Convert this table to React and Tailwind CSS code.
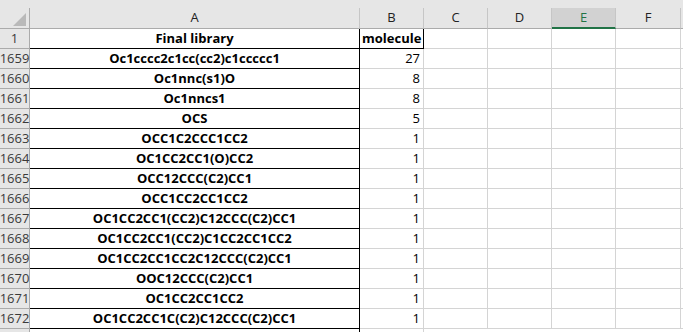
import React from "react";

// sheet rows: row number, SMILES string, molecule count
const rows = [
  [1659, "Oc1cccc2c1cc(cc2)c1ccccc1", 27],
  [1660, "Oc1nnc(s1)O", 8],
  [1661, "Oc1nncs1", 8],
  [1662, "OCS", 5],
  [1663, "OCC1C2CCC1CC2", 1],
  [1664, "OC1CC2CC1(O)CC2", 1],
  [1665, "OCC12CCC(C2)CC1", 1],
  [1666, "OCC1CC2CC1CC2", 1],
  [1667, "OC1CC2CC1(CC2)C12CCC(C2)CC1", 1],
  [1668, "OC1CC2CC1(CC2)C1CC2CC1CC2", 1],
  [1669, "OC1CC2CC1CC2C12CCC(C2)CC1", 1],
  [1670, "OOC12CCC(C2)CC1", 1],
  [1671, "OC1CC2CC1CC2", 1],
  [1672, "OC1CC2CC1C(C2)C12CCC(C2)CC1", 1],
];

const font = { fontFamily: "'Open Sans', Lato, sans-serif" };

const EmptyCells = () => (
  <>
    <div className="w-[64px] shrink-0 border-r border-b border-[#d4d4d4]" />
    <div className="w-[64px] shrink-0 border-r border-b border-[#d4d4d4]" />
    <div className="w-[64px] shrink-0 border-r border-b border-[#d4d4d4]" />
    <div className="w-[65px] shrink-0 border-r border-b border-[#d4d4d4]" />
    <div className="flex-1 border-b border-[#d4d4d4]" />
  </>
);

const RowHead = ({ n }) => (
  <div className="w-[30px] shrink-0 flex items-center justify-center bg-[#e6e6e6] border-r border-b border-[#ababab] text-[13px] text-[#3a3a3a]">
    <span className="whitespace-nowrap">{n}</span>
  </div>
);

export default function App() {
  return (
    <div className="w-[683px] h-[332px] overflow-hidden bg-white select-none" style={font}>
      <div className="h-[8px] bg-[#e6e6e6]" />

      {/* column header strip */}
      <div className="flex h-[21px] bg-[#e6e6e6] text-[13px] text-[#222]">
        <div className="w-[30px] shrink-0 relative border-r border-b border-[#ababab]">
          <svg className="absolute left-[13px] top-[5px]" width="13" height="13" viewBox="0 0 13 13">
            <polygon points="13,0 13,13 0,13" fill="#b9b9b9" />
          </svg>
        </div>
        <div className="w-[330px] shrink-0 flex items-center justify-center border-r border-b border-r-[#c6c6c6] border-b-[#ababab]">A</div>
        <div className="w-[64px] shrink-0 flex items-center justify-center border-r border-b border-r-[#c6c6c6] border-b-[#ababab]">B</div>
        <div className="w-[64px] shrink-0 flex items-center justify-center border-r border-b border-r-[#c6c6c6] border-b-[#ababab]">C</div>
        <div className="w-[64px] shrink-0 flex items-center justify-center border-r border-b border-r-[#c6c6c6] border-b-[#ababab]">D</div>
        <div className="w-[64px] shrink-0 flex items-center justify-center bg-[#d2d2d2] text-[#217346] border-r border-r-[#c6c6c6] border-b-2 border-b-[#217346]">E</div>
        <div className="w-[65px] shrink-0 flex items-center justify-center border-r border-b border-r-[#c6c6c6] border-b-[#ababab]">F</div>
        <div className="flex-1 border-b border-[#ababab]" />
      </div>

      {/* row 1: titles */}
      <div className="flex h-[20px] text-[13px] text-black">
        <RowHead n={1} />
        <div className="w-[330px] shrink-0 flex items-center justify-center font-bold border-r border-b border-black">Final library</div>
        <div className="w-[64px] shrink-0 flex items-center pl-[2px] font-bold border-r border-b border-black whitespace-nowrap">molecule</div>
        <EmptyCells />
      </div>

      {rows.map(([n, smiles, count]) => (
        <div key={n} className="flex h-[20px] text-[13px] text-black">
          <RowHead n={n} />
          <div className="w-[330px] shrink-0 flex items-center justify-center font-bold border-r border-b border-black whitespace-nowrap">
            {smiles}
          </div>
          <div className="w-[64px] shrink-0 flex items-center justify-end pr-[3px] border-r border-b border-[#d4d4d4]">{count}</div>
          <EmptyCells />
        </div>
      ))}

      <div className="flex h-[20px]">
        <div className="w-[30px] shrink-0 bg-[#e6e6e6] border-r border-[#ababab]" />
        <div className="w-[330px] shrink-0 border-r border-black" />
        <div className="w-[64px] shrink-0 border-r border-[#d4d4d4]" />
      </div>
    </div>
  );
}
